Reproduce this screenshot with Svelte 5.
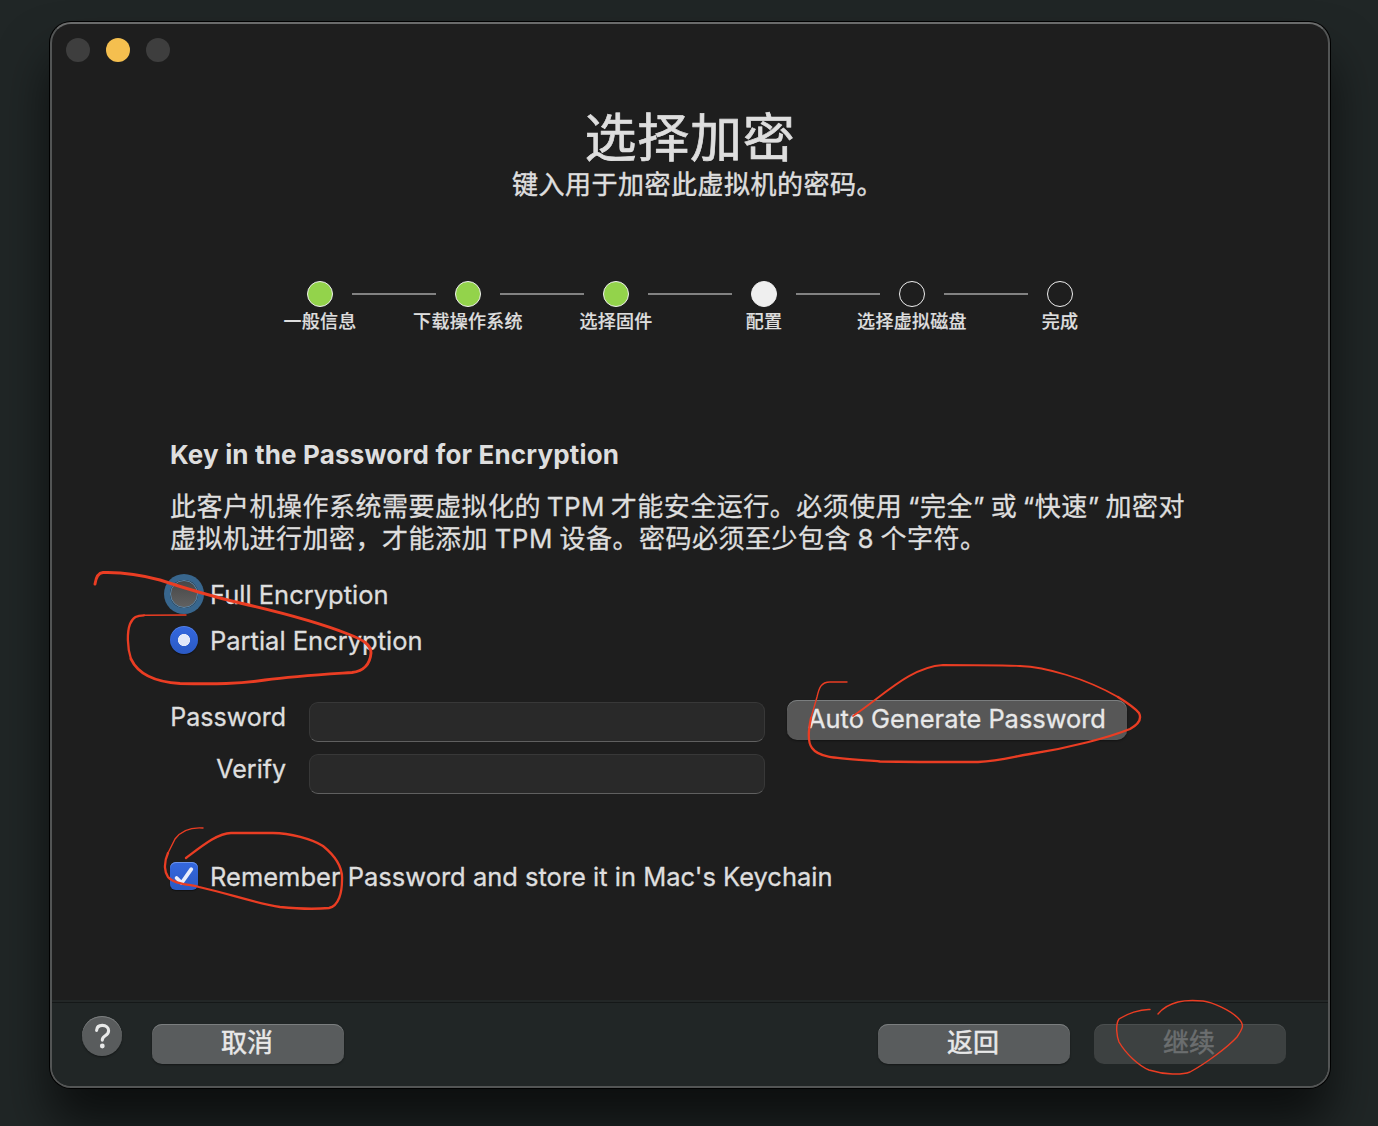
<script>
  const steps = [
    { label: '一般信息', state: 'done' },
    { label: '下载操作系统', state: 'done' },
    { label: '选择固件', state: 'done' },
    { label: '配置', state: 'current' },
    { label: '选择虚拟磁盘', state: 'todo' },
    { label: '完成', state: 'todo' }
  ];
</script>

<div class="desktop">
  <div class="window">
    <div class="titlebar">
      <span class="dot"></span>
      <span class="dot amber"></span>
      <span class="dot"></span>
    </div>

    <header>
      <h1>选择加密</h1>
      <p>键入用于加密此虚拟机的密码。</p>
    </header>

    <ol class="steps">
      {#each steps as step}
        <li>
          <span class="circle {step.state}"></span>
          <span class="step-label">{step.label}</span>
        </li>
      {/each}
    </ol>

    <main>
      <h2>Key in the Password for Encryption</h2>
      <p class="info">
        <span class="line first">此客户机操作系统需要虚拟化的 TPM 才能安全运行。必须使用 “完全” 或 “快速” 加密对</span>
        <span class="line second">虚拟机进行加密，才能添加 TPM 设备。密码必须至少包含 8 个字符。</span>
      </p>

      <div class="option">
        <span class="radio focused"></span>
        <span class="text">Full Encryption</span>
      </div>
      <div class="option">
        <span class="radio checked"></span>
        <span class="text">Partial Encryption</span>
      </div>

      <div class="form">
        <div class="fields">
          <span class="field-label">Password</span>
          <span class="input"></span>
          <span class="field-label">Verify</span>
          <span class="input"></span>
        </div>
        <button class="generate">Auto Generate Password</button>
      </div>

      <div class="option">
        <span class="checkbox">
          <svg width="28" height="28" viewBox="0 0 28 28">
            <path d="M6.6 16 L11.6 21 L21.3 7.2" fill="none" stroke="#e9edfb" stroke-width="3.8" stroke-linecap="round" stroke-linejoin="round" />
          </svg>
        </span>
        <span class="text">Remember Password and store it in Mac's Keychain</span>
      </div>
    </main>

    <footer>
      <button class="help" aria-label="Help">
        <svg width="40" height="40" viewBox="0 0 40 40">
          <path d="M14.6 14.4 C14.8 11.2 17 9.4 20.3 9.4 C24 9.4 26.6 11.6 26.6 14.7 C26.6 17 25.3 18.4 23.2 19.7 C21.1 21 20.3 21.9 20.3 24.1" fill="none" stroke="#e8e9e9" stroke-width="3.1" stroke-linecap="round" />
          <circle cx="20.3" cy="30" r="2.4" fill="#e8e9e9" />
        </svg>
      </button>
      <button class="push">取消</button>
      <span class="spacer"></span>
      <button class="push">返回</button>
      <button class="push disabled">继续</button>
    </footer>
  </div>

  <!-- Hand-drawn marker strokes laid over the dialog -->
  <svg class="marker" width="1378" height="1126" viewBox="0 0 1378 1126">
    <path class="bold" d="M95 584 C96 577 98 573 103 572.5 C120 572 142 575 160 580 C190 590 210 596 240 603 C275 611 315 621 348 634 C364 640 371 645 371 653 C370 665 364 671 352 672.5 C330 674 295 676 265 680 C240 684 215 684 180 683.5 C155 682 138 674 131 659" />
    <path class="mid" d="M131 659 C127 647 127 632 130 624 C133 617 137 615.5 144 615.3" />
    <path class="thin" d="M144 615.3 L186 615" />
    <path class="thin" d="M847 682 L830 682 C821 682 819 688 817 697 L811 718" />
    <path class="mid" d="M811 718 C808 732 808 743 812 748 C819 758 835 758 880 761.5 C910 762 950 762 978 762 C1000 761 1012 757 1030 754 C1070 748 1110 737 1130 729 C1139 724 1142 719 1139 713 C1135 708 1126 702 1118 697" />
    <path class="thin wide" d="M1118 697 C1085 678 1045 667 1020 666 C990 665 965 665 943 665 C910 667 883 696 853 716" />
    <path class="thin" d="M203 828 C190 827 181 831 175 839 L168 853" />
    <path class="mid" d="M168 853 C163 864 165 873 168 877 C174 884 187 884 199 887 C230 894 255 903 280 907 C300 909 318 909 329 908 C339 906 342 892 342 880 C343 867 334 855 323 846 C312 839 290 833 273 833 L231 833 C218 833 202 846 186 858" />
    <path class="thin" d="M1150 1009.5 C1140 1009 1127 1014 1119 1019 C1115 1025 1117 1037 1119 1042 C1126 1054 1139 1066 1149 1070 C1165 1075 1182 1075 1190 1072 C1205 1064 1228 1047 1237 1037 C1243 1028 1245 1025 1238 1018 C1230 1010 1212 1002 1203 1001 C1192 1000 1182 1001 1178 1002 C1170 1004 1162 1009 1158 1014" />
  </svg>
</div>

<style>
  :global(body) {
    margin: 0;
    background: #202626;
  }
  .desktop {
    box-sizing: border-box;
    position: relative;
    width: 1378px;
    height: 1126px;
    padding: 22px 48px 38px 50px;
    overflow: hidden;
    background: #202626;
    color: #dedede;
    font-family: Inter, 'Noto Sans CJK SC', sans-serif;
    font-size: 25px;
    -webkit-text-stroke: 0.3px currentColor;
  }
  .window {
    box-sizing: border-box;
    display: flex;
    flex-direction: column;
    width: 1280px;
    height: 1066px;
    border: 2px solid #535555;
    border-top-color: #6a6b6b;
    border-radius: 21px;
    background: #1e1e1e;
    background-clip: padding-box;
    overflow: hidden;
    box-shadow: 0 0 0 1px #000, 0 36px 50px rgba(0, 0, 0, 0.62);
  }
  .titlebar {
    box-sizing: border-box;
    display: flex;
    gap: 16px;
    height: 80px;
    padding: 14px 14px 0;
  }
  .dot {
    width: 24px;
    height: 24px;
    border-radius: 50%;
    background: #3e3e3e;
  }
  .amber {
    background: #f5bf4f;
  }
  header {
    display: flex;
    flex-direction: column;
    align-items: center;
    height: 177px;
    text-align: center;
  }
  h1 {
    margin: 0;
    height: 68px;
    line-height: 70px;
    font-size: 52px;
    font-weight: 400;
    letter-spacing: 0.8px;
    -webkit-text-stroke-width: 0.7px;
  }
  header p {
    margin: 0;
    height: 26px;
    line-height: 26px;
    font-size: 26px;
    letter-spacing: 0.5px;
    padding-left: 15px;
    -webkit-text-stroke-width: 0.45px;
  }
  .steps {
    display: flex;
    margin: 0;
    padding: 0 0 0 194px;
    list-style: none;
    height: 156px;
  }
  li {
    position: relative;
    display: flex;
    flex-direction: column;
    align-items: center;
    width: 148px;
  }
  li + li::before {
    content: '';
    position: absolute;
    top: 12px;
    left: -42px;
    width: 84px;
    height: 2px;
    background: #828282;
  }
  .circle {
    box-sizing: border-box;
    width: 26px;
    height: 26px;
    border: 1.5px solid #efefef;
    border-radius: 50%;
  }
  .done {
    background: #93d34b;
  }
  .current {
    background: #efefef;
  }
  .step-label {
    height: 28px;
    line-height: 30px;
    font-size: 18px;
    font-weight: 500;
    letter-spacing: 0.3px;
    white-space: nowrap;
    -webkit-text-stroke-width: 0.2px;
  }
  main {
    padding: 0 118px;
    height: 563px;
  }
  h2 {
    margin: 0;
    height: 54px;
    line-height: 36px;
    font-size: 26px;
    font-weight: 700;
    letter-spacing: 0.16px;
    white-space: nowrap;
    -webkit-text-stroke-width: 0;
  }
  .info {
    margin: 0;
    height: 80px;
  }
  .line {
    display: block;
    height: 32px;
    line-height: 32px;
    font-size: 26px;
    letter-spacing: 0.5px;
    white-space: nowrap;
  }
  .first {
    word-spacing: -2.1px;
  }
  .second {
    word-spacing: -1.3px;
  }
  .option {
    display: flex;
    align-items: center;
    gap: 12px;
    height: 46px;
    white-space: nowrap;
  }
  .text {
    padding-top: 1px;
    font-size: 25.5px;
  }
  .radio {
    box-sizing: border-box;
    width: 28px;
    height: 28px;
    border-radius: 50%;
  }
  .focused {
    border: 1px solid #5c89ad;
    background: linear-gradient(#474747, #616161);
    box-shadow: 0 0 0 6px #38668d;
  }
  .checked {
    background: radial-gradient(circle, #e2e8f9 5.7px, transparent 6.4px), linear-gradient(#3468df, #2b5ac4);
    box-shadow: inset 0 1px 0 #5682e5, 0 1px 1px #111;
  }
  .form {
    display: flex;
    gap: 22px;
    margin-top: 37px;
    height: 153px;
  }
  .fields {
    display: grid;
    grid-template-columns: 116px 456px;
    grid-template-rows: 40px 40px;
    column-gap: 23px;
    row-gap: 12px;
    padding-top: 2px;
  }
  .field-label {
    line-height: 30px;
    text-align: right;
    white-space: nowrap;
  }
  .input {
    box-sizing: border-box;
    border: 1px solid #383838;
    border-bottom-color: #606060;
    border-radius: 9px;
    background: #292929;
  }
  button {
    box-sizing: border-box;
    border: 0;
    padding: 0;
    border-radius: 10px;
    height: 40px;
    color: #e8e8e8;
    font: inherit;
    white-space: nowrap;
    box-shadow: inset 0 1px 0 #7b7e7f, 0 1px 2px rgba(0, 0, 0, 0.4);
  }
  .generate {
    width: 340px;
    padding-bottom: 3px;
    font-size: 25.4px;
    background: #575757;
  }
  .checkbox {
    width: 28px;
    height: 28px;
    border-radius: 6px;
    background: linear-gradient(#3468df, #2b5ac4);
    box-shadow: inset 0 1px 0 #6d94ea, 0 1px 1px #111;
  }
  svg {
    display: block;
  }
  footer {
    box-sizing: border-box;
    display: flex;
    flex: 1;
    padding: 18px 42px 0 30px;
    border-top: 2px solid #232727;
    background: #212626;
    box-shadow: inset 0 1px 0 #151818;
  }
  .help {
    width: 40px;
    margin: -4px 30px 0 0;
    border-radius: 50%;
    background: #595c5d;
  }
  .push {
    width: 192px;
    margin-top: 4px;
    padding: 0 2px 2px 0;
    line-height: 38px;
    font-size: 26px;
    background: #595c5d;
    -webkit-text-stroke-width: 0.5px;
  }
  .spacer {
    flex: 1;
  }
  .disabled {
    margin-left: 24px;
    color: #6b6e6f;
    background: #3d4141;
    box-shadow: inset 0 1px 0 #4b4f4f;
  }
  .marker {
    position: absolute;
    inset: 0;
    pointer-events: none;
  }
  .marker path {
    fill: none;
    stroke: #ea3d23;
    stroke-linecap: round;
    stroke-linejoin: round;
  }
  .marker .bold {
    stroke-width: 2.9;
  }
  .marker .mid {
    stroke-width: 2.3;
  }
  .marker .thin {
    stroke-width: 1.4;
  }
  .marker .wide {
    stroke-width: 1.8;
  }
</style>
